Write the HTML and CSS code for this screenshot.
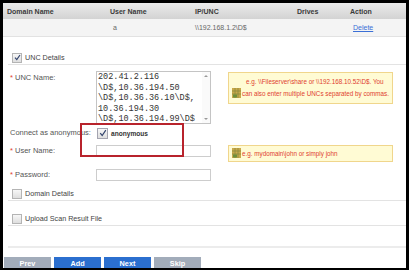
FILE: index.html
```html
<!DOCTYPE html>
<html lang="en">
<head>
    <meta charset="UTF-8">
    <title>Scan Target - UNC Details</title>
    <link rel="stylesheet" href="styles.css">
</head>
<body>
    <div class="frame">
        <table class="grid">
            <tr class="grid-head">
                <th class="col-domain">Domain Name</th>
                <th class="col-user">User Name</th>
                <th class="col-unc">IP/UNC</th>
                <th class="col-drives">Drives</th>
                <th class="col-action">Action</th>
            </tr>
            <tr class="grid-row">
                <td></td>
                <td class="indent">a</td>
                <td>\\192.168.1.2\D$</td>
                <td></td>
                <td class="indent"><a href="#">Delete</a></td>
            </tr>
        </table>

        <div class="section section-unc">
            <span class="check checked"><svg width="7" height="7" viewBox="0 0 7 7"><path d="M1 3.6 L2.8 5.6 L6 1" fill="none" stroke="#34456e" stroke-width="1.2"/></svg></span>
            <span>UNC Details</span>
        </div>

        <div class="row row-unc">
            <div class="label"><span class="req">*</span> UNC Name:</div>
            <div class="unc-box">
                <div class="unc-text">202.41.2.116<br>\D$,10.36.194.50<br>\D$,10.36.36.10\D$,<br>10.36.194.30<br>\D$,10.36.194.99\D$</div>
                <div class="scrollbar">
                    <span class="arrow-up"></span>
                    <span class="arrow-down"></span>
                </div>
            </div>
            <div class="hint hint-unc">
                <span class="hint-icon"><svg width="9" height="10" viewBox="0 0 9 10"><rect x="0" y="0" width="9" height="10" fill="#c9a84a"/><path d="M0 3h9M0 6h9M3 0v10M6 0v10" stroke="#8c8a3c" stroke-width="0.8"/><rect x="1" y="6.5" width="4" height="3" fill="#6f8f3a"/></svg></span>
                <span class="hint-text"><span class="first-line">e.g. \\Fileserver\share or \\192.168.10.52\D$. You</span><br>can also enter multiple UNCs separated by commas.</span>
            </div>
        </div>

        <div class="row row-anon">
            <div class="label">Connect as anonymous:</div>
            <div class="field anon">
                <span class="check check-big checked"><svg width="8" height="8" viewBox="0 0 8 8"><path d="M1.2 4.2 L3.2 6.5 L6.8 1.2" fill="none" stroke="#34456e" stroke-width="1.2"/></svg></span>
                <span class="anon-text">anonymous</span>
            </div>
        </div>

        <div class="row row-user">
            <div class="label"><span class="req">*</span> User Name:</div>
            <div class="field"><span class="input"></span></div>
            <div class="hint hint-user">
                <span class="hint-icon"><svg width="9" height="10" viewBox="0 0 9 10"><rect x="0" y="0" width="9" height="10" fill="#c9a84a"/><path d="M0 3h9M0 6h9M3 0v10M6 0v10" stroke="#8c8a3c" stroke-width="0.8"/><rect x="1" y="6.5" width="4" height="3" fill="#6f8f3a"/></svg></span>
                <span class="hint-text">e.g. mydomain\john or simply john</span>
            </div>
        </div>

        <div class="row row-pass">
            <div class="label"><span class="req">*</span> Password:</div>
            <div class="field"><span class="input"></span></div>
        </div>

        <div class="section section-domain">
            <span class="check"></span>
            <span>Domain Details</span>
        </div>

        <div class="section section-upload">
            <span class="check"></span>
            <span>Upload Scan Result File</span>
        </div>

        <div class="spacer"></div>

        <div class="buttons">
            <a href="#" class="btn btn-grey">Prev</a>
            <a href="#" class="btn btn-blue">Add</a>
            <a href="#" class="btn btn-blue">Next</a>
            <a href="#" class="btn btn-grey">Skip</a>
        </div>

        <!-- highlight drawn around the anonymous option -->
        <div class="callout"></div>
    </div>
</body>
</html>
```

FILE: styles.css
```css
/* Page */
body {
    margin: 0;
    padding: 0;
    background-color: #000;
    font-family: "Liberation Sans", Arial, sans-serif;
    font-size: 7px;
    color: #555;
}
.frame {
    position: relative;
    width: 403px;
    height: 265px;
    margin: 3px 3px 0 3px;
    background-color: #fff;
    overflow: hidden;
}

/* Grid of targets */
.grid {
    width: 403px;
    border-collapse: collapse;
    table-layout: fixed;
}
.grid th,
.grid td {
    padding: 0 0 0 4px;
    text-align: left;
    white-space: nowrap;
}
.grid-head th {
    height: 16px;
    background: linear-gradient(#ebebeb, #d3d3d3);
    color: #3a3a3a;
    font-weight: bold;
}
.grid-row td {
    height: 17px;
    background-color: #f4f4f4;
    border-bottom: 1px solid #e2e2e2;
    color: #666;
}
.grid td.indent {
    padding-left: 7px;
}
.grid a {
    color: #3b6fd6;
}
.col-domain { width: 99px; }
.col-user { width: 81px; }
.col-unc { width: 98px; }
.col-drives { width: 49px; }

/* Section headers with checkbox */
.section {
    display: flex;
    align-items: center;
    height: 13px;
    margin-left: 5px;
    padding-left: 4px;
    border-bottom: 1px solid #e3e3e3;
    color: #444;
    font-size: 7.2px;
}
.section-unc { margin-top: 14px; }
.section-domain { margin-top: 6px; }
.section-upload { margin-top: 11px; }
.spacer {
    height: 20px;
    margin-left: 5px;
    border-bottom: 2px solid #ececec;
}

.check {
    display: inline-flex;
    align-items: center;
    justify-content: center;
    width: 8px;
    height: 8px;
    margin-right: 3px;
    border: 1px solid #b4b4b4;
    background: linear-gradient(#f7f7f7, #dedede);
}
.check-big {
    width: 9px;
    height: 9px;
    border-color: #a4a4b0;
}

/* Form rows */
.row {
    display: flex;
    align-items: flex-start;
    padding-left: 7px;
}
.label {
    width: 86px;
    flex-shrink: 0;
    font-size: 7.5px;
    line-height: 12px;
    white-space: nowrap;
}
.row-unc .label {
    padding-top: 1px;
}
.req {
    color: #e0402f;
}
.field {
    width: 115px;
    flex-shrink: 0;
}
.row-unc { margin-top: 6px; height: 53px; }
.row-anon { margin-top: 3px; height: 12px; }
.row-user { margin-top: 6px; height: 17px; }
.row-pass { margin-top: 7px; height: 12px; }

.unc-box {
    display: flex;
    width: 113px;
    height: 51px;
    flex-shrink: 0;
    border: 1px solid #c4c4c4;
    background-color: #fff;
}
.unc-text {
    flex: 1;
    padding-left: 1px;
    font-family: "Liberation Mono", "Courier New", monospace;
    font-size: 8.5px;
    line-height: 10.6px;
    color: #333;
    white-space: nowrap;
    overflow: hidden;
}
.scrollbar {
    display: flex;
    flex-direction: column;
    justify-content: space-between;
    align-items: center;
    width: 8px;
    padding: 3px 0;
    background-color: #fafafa;
}
.arrow-up,
.arrow-down {
    width: 0;
    height: 0;
    border-left: 2px solid transparent;
    border-right: 2px solid transparent;
}
.arrow-up { border-bottom: 2px solid #999; }
.arrow-down { border-top: 2px solid #999; }

.anon {
    display: flex;
    align-items: center;
    height: 12px;
    padding-left: 1px;
}
.anon-text {
    font-size: 6.6px;
    font-weight: bold;
    color: #333;
}

.input {
    display: block;
    width: 113px;
    height: 10px;
    border: 1px solid #cdcdcd;
    background-color: #fff;
}

/* Yellow hint boxes */
.hint {
    display: flex;
    align-items: flex-end;
    width: 158px;
    margin-left: 17px;
    padding: 3px 2px 3px 3px;
    border: 1px solid #f0d68c;
    background-color: #fffbd4;
    color: #e0402f;
    font-size: 6.3px;
    line-height: 12px;
    white-space: nowrap;
}
.hint-unc {
    margin-top: 1px;
    height: 24px;
}
.hint-unc .hint-icon {
    margin-bottom: 2px;
}
.hint-unc .first-line {
    padding-left: 4px;
}
.hint-user {
    height: 9px;
    padding-top: 3px;
    line-height: 9px;
}
.hint-icon {
    display: flex;
    flex-shrink: 0;
    width: 9px;
    height: 10px;
    margin-right: 1px;
}

/* Wizard buttons */
.buttons {
    display: flex;
    gap: 3px;
    margin: 9px 0 0 1px;
}
.btn {
    display: flex;
    align-items: center;
    justify-content: center;
    width: 47px;
    height: 13px;
    color: #fff;
    font-size: 7.3px;
    font-weight: bold;
    text-decoration: none;
}
.btn-grey { background-color: #a2acba; }
.btn-blue { background-color: #2b6fcf; }

/* Red annotation box */
.callout {
    position: absolute;
    left: 77px;
    top: 120px;
    width: 100px;
    height: 30px;
    border: 2px solid #b8232c;
}
```
